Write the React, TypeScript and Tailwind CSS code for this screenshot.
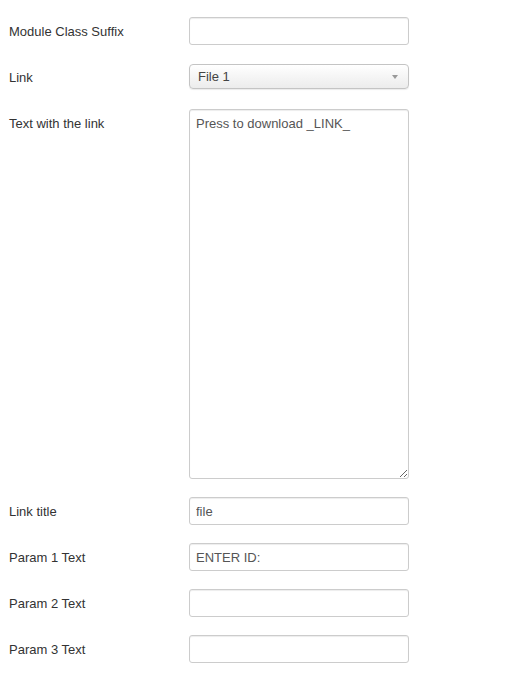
import React from "react";

const inputCls =
  "box-border h-[28px] w-[220px] rounded-[3px] border border-[#cccccc] bg-white px-[6px] font-['Liberation_Sans',Arial,sans-serif] text-[13px] text-[#555555] shadow-[inset_0_1px_1px_rgba(0,0,0,0.075)] outline-none";

function Row({ label, children }: { label: string; children: React.ReactNode }) {
  return (
    <div className="mb-[18px] flex">
      <label className="w-[180px] shrink-0 pt-[8px] text-[13px] leading-[14px] text-[#333333]">
        {label}
      </label>
      {children}
    </div>
  );
}

export default function App() {
  return (
    <div className="min-h-[685px] w-[524px] bg-white pl-[9px] pt-[17px] font-['Liberation_Sans',Arial,sans-serif]">
      <Row label="Module Class Suffix">
        <input className={inputCls} defaultValue="" />
      </Row>
      <Row label="Link">
        <div className="h-[28px] pt-[1px]">
          <div className="relative box-border flex h-[25px] w-[220px] items-center rounded-[4px] border border-[#c4c4c4] bg-gradient-to-b from-white to-[#ececec] pl-[8px] text-[13px] text-[#444444] shadow-[0_1px_1px_rgba(0,0,0,0.08)]">
            File 1
            <span className="absolute right-[10px] top-[10px] h-0 w-0 border-x-[3px] border-t-[4px] border-x-transparent border-t-[#999999]" />
          </div>
        </div>
      </Row>
      <Row label="Text with the link">
        <textarea
          className="box-border h-[370px] w-[220px] resize rounded-[3px] border border-[#cccccc] bg-white px-[6px] py-[5px] font-['Liberation_Sans',Arial,sans-serif] text-[13px] leading-[18px] text-[#555555] shadow-[inset_0_1px_1px_rgba(0,0,0,0.075)] outline-none"
          defaultValue="Press to download _LINK_"
        />
      </Row>
      <Row label="Link title">
        <input className={inputCls} defaultValue="file" />
      </Row>
      <Row label="Param 1 Text">
        <input className={inputCls} defaultValue="ENTER ID:" />
      </Row>
      <Row label="Param 2 Text">
        <input className={inputCls} defaultValue="" />
      </Row>
      <Row label="Param 3 Text">
        <input className={inputCls} defaultValue="" />
      </Row>
    </div>
  );
}
